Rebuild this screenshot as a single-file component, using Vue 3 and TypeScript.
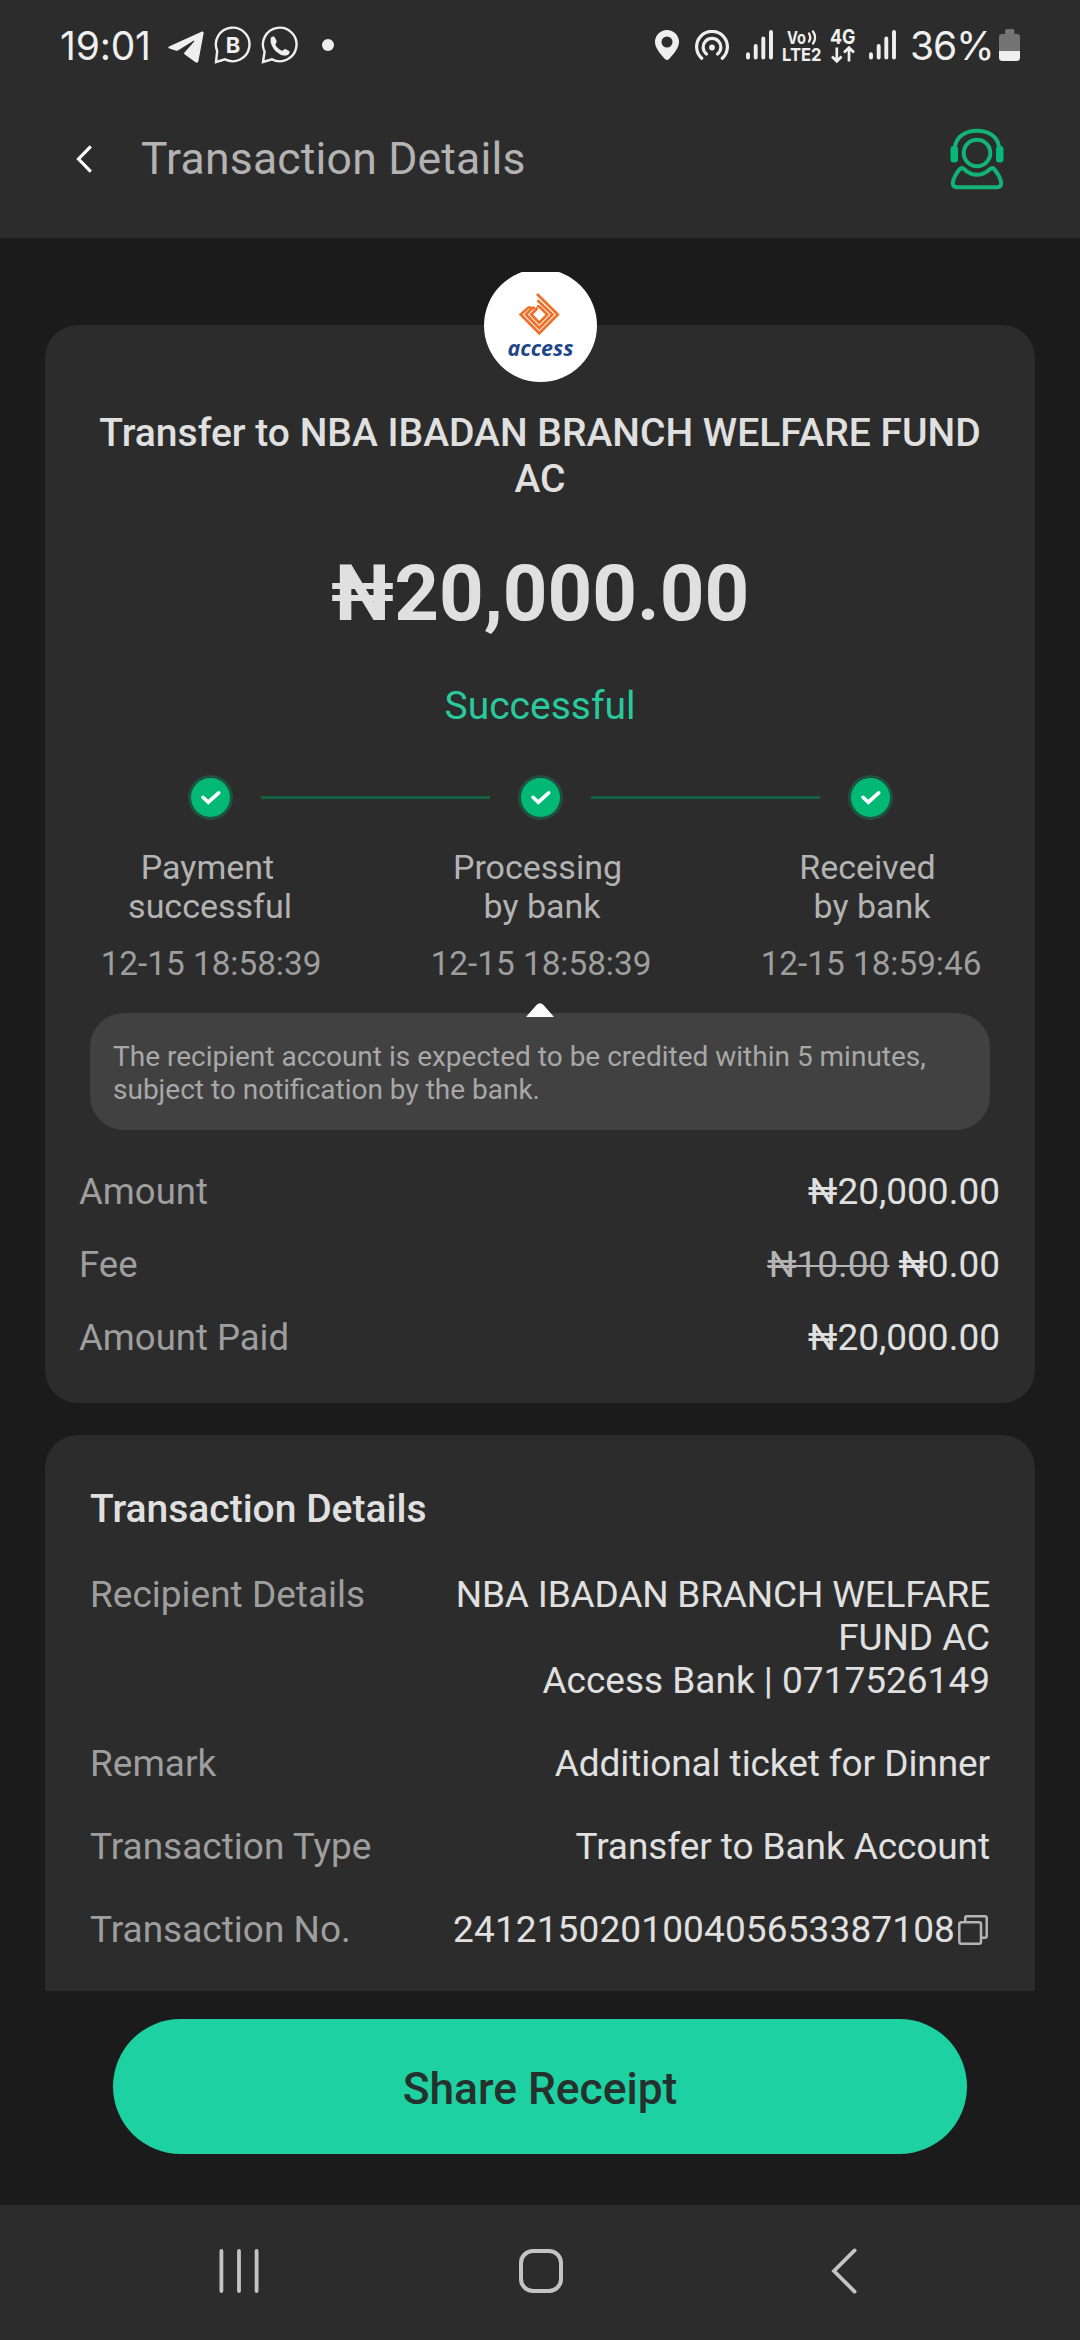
<script setup lang="ts">
interface Step {
  lines: [string, string]
  time: string
}
interface Detail {
  label: string
  value: string[]
  copy?: boolean
}

const steps: Step[] = [
  { lines: ['Payment', 'successful'], time: '12-15 18:58:39' },
  { lines: ['Processing', 'by bank'], time: '12-15 18:58:39' },
  { lines: ['Received', 'by bank'], time: '12-15 18:59:46' },
]

const amounts: { label: string; value: string; old?: string }[] = [
  { label: 'Amount', value: '₦20,000.00' },
  { label: 'Fee', value: '₦0.00', old: '₦10.00' },
  { label: 'Amount Paid', value: '₦20,000.00' },
]

const details: Detail[] = [
  { label: 'Recipient Details', value: ['NBA IBADAN BRANCH WELFARE', 'FUND AC', 'Access Bank | 0717526149'] },
  { label: 'Remark', value: ['Additional ticket for Dinner'] },
  { label: 'Transaction Type', value: ['Transfer to Bank Account'] },
  { label: 'Transaction No.', value: ['241215020100405653387108'], copy: true },
]
</script>

<template>
  <div class="screen">
    <header class="top">
      <div class="status">
        <div class="status-left">
          <span class="clock">19:01</span>
          <svg class="telegram" width="36" height="32" viewBox="0 0 36 32" fill="#efefef">
            <path d="M1.5 15.2 33.5 .7c1.3-.5 2.4.2 2.1 1.8L30.4 30c-.4 1.6-1.6 2.1-2.9 1.2L16.8 23.600c-.9-.7-.9-1.500-.1-2.300L26 10.800c.6-.8 0-1.300-.9-.8L10.300 19.200c-1 .6-1.800.7-2.900.4L1.400 17.600c-1.500-.5-1.500-1.700.1-2.400z" />
          </svg>
          <svg class="bubble" width="37" height="38" viewBox="0 0 37 38" fill="none" stroke="#efefef" stroke-width="2.400">
            <path d="M2 36 3.200 25A16.800 16.800 0 1 1 11 33.400z" />
            <text x="19" y="26.800" text-anchor="middle" class="bubble-letter">B</text>
          </svg>
          <svg class="bubble" width="37" height="38" viewBox="0 0 37 38" fill="none" stroke="#efefef" stroke-width="2.400">
            <path d="M2 36 3.600 25.800A16.800 16.800 0 1 1 11 33.400z" />
            <path d="M10 11.500c1.500-1.500 3.300-1.300 4 .2l1.700 3.600c.4 1-1.500 2.700-1.300 3.500 1.300 2.700 3.700 4.900 6.500 6 .9.300 2.400-2.100 3.500-1.700l3.700 1.900c1.200.7.5 2.500-1 3.700-6.500 4.300-20-7.500-17.100-17.200z" fill="#efefef" stroke="none" />
          </svg>
          <span class="dot"></span>
        </div>
        <div class="status-right">
          <svg class="pin" width="24" height="30" viewBox="0 0 24 30">
            <path fill-rule="evenodd" fill="#efefef" d="M12 0a12 12 0 0 1 12 12c0 6.500-6 12.500-10.200 17.200q-1.800 1.600-3.600 0C6 24.500 0 18.500 0 12A12 12 0 0 1 12 0zm0 6.500a5.500 5.500 0 1 0 0 11 5.500 5.500 0 0 0 0-11z" />
          </svg>
          <svg class="hotspot" width="34" height="30" viewBox="0 0 34 30" fill="none" stroke="#efefef" stroke-width="3.200" stroke-linecap="round">
            <path d="M6.700 28.200A15.400 15.400 0 1 1 27.300 28.200M11.400 24A8.800 8.800 0 1 1 22.600 24" />
            <circle cx="17" cy="17.500" r="2.900" fill="#efefef" stroke="none" />
          </svg>
          <svg class="signal" width="28" height="30" viewBox="0 0 28 30" stroke="#efefef" stroke-width="3.900" stroke-linecap="round">
            <path d="M2 24.200V27.500M9.700 16V27.500M17.300 8.500V27.500M25 2V27.500" />
          </svg>
          <svg class="volte" width="40" height="34" viewBox="0 0 40 34" fill="#efefef">
            <text x="5" y="15" class="mini" textLength="19" lengthAdjust="spacingAndGlyphs">Vo</text>
            <path d="M27 4.500q2.500 4 0 8M31 2.500q4.200 6 0 12" fill="none" stroke="#efefef" stroke-width="2.300" stroke-linecap="round" />
            <text x="0" y="31.700" class="mini" textLength="39.500" lengthAdjust="spacingAndGlyphs">LTE2</text>
          </svg>
          <svg class="fourg" width="26" height="36" viewBox="0 0 26 36" fill="#efefef">
            <text x="0" y="16" class="mini-4g" textLength="25.500" lengthAdjust="spacingAndGlyphs">4G</text>
            <path d="M6.800 19.500V33M2 28.500 6.800 33.300 11.600 28.500M19 33.500V20M14 24.500 19 19.700 24 24.500" fill="none" stroke="#efefef" stroke-width="2.700" />
          </svg>
          <svg class="signal two" width="28" height="30" viewBox="0 0 28 30" stroke="#efefef" stroke-width="3.900" stroke-linecap="round">
            <path d="M2 24.200V27.500M9.700 16V27.500M17.300 8.500V27.500M25 2V27.500" />
          </svg>
          <span class="percent">36%</span>
          <svg class="battery" width="21" height="32" viewBox="0 0 21 32">
            <path d="M6 5V2Q6 0 8 0h5.500q2 0 2 2v3H18q3 0 3 3v14H0V8q0-3 3-3z" fill="#737373" />
            <path d="M0 22h21v6.500Q21 32 17.500 32h-14Q0 32 0 28.500z" fill="#efefef" />
          </svg>
        </div>
      </div>
      <div class="appbar">
        <svg class="back" width="17" height="28" viewBox="0 0 17 28" fill="none" stroke="#fff" stroke-width="3.200">
          <path d="M14.800 1.300 2.500 14 14.800 26.700" />
        </svg>
        <h1>Transaction Details</h1>
        <svg class="agent" width="54" height="62" viewBox="0 0 54 62" fill="none" stroke="#12b27a" stroke-width="4">
          <path d="M5 19C6 9 15 2.700 27 2.700S48 9 49 19" />
          <circle cx="27" cy="25" r="13.300" />
          <rect x=".5" y="18" width="7.500" height="16.500" rx="3" fill="#05b877" stroke="none" />
          <rect x="46" y="18" width="7.500" height="16.500" rx="3" fill="#05b877" stroke="none" />
          <path d="M10.500 40.500C6.500 44.500 2.800 51 2.800 55.500Q3 59.200 6.800 59.200H47.200Q51 59.200 51.200 55.500C51.200 51 47.500 44.500 43.500 40.500Q41.800 39.400 39.800 41.200 34 46.800 27 46.800T14.200 41.200Q12.200 39.400 10.500 40.500z" />
        </svg>
      </div>
    </header>

    <main class="content">
      <section class="card summary">
        <svg class="bank-logo" width="113" height="110" viewBox="0 0 113 110">
          <circle cx="56.500" cy="53.500" r="56.500" fill="#fff" />
          <g fill="none" stroke="#ee7028" stroke-width="2.700">
            <path d="M53 22 73.800 42.500 55.300 61.300 36.700 42.500 44.500 35.500H47.500" />
            <path d="M53.500 28.200 68.500 42.500 55.300 56 42 42.500 48.500 35.800H51" />
            <path d="M53 34 55.300 34.600 63.300 42.500 55.300 50.700 47.200 42.500 53.500 36" />
          </g>
          <text x="23.500" y="84" class="bank-name" textLength="66" lengthAdjust="spacingAndGlyphs">access</text>
        </svg>

        <h2>Transfer to NBA IBADAN BRANCH WELFARE FUND AC</h2>
        <div class="total">₦20,000.00</div>
        <div class="state">Successful</div>

        <div class="track">
          <template v-for="(s, i) in steps" :key="i">
            <span v-if="i > 0" class="line"></span>
            <svg class="check" width="45" height="45" viewBox="0 0 45 45">
              <circle cx="22.500" cy="22.500" r="22.500" fill="#215040" />
              <circle cx="22.500" cy="22.500" r="19.500" fill="#02b875" />
              <path d="M15 22.300 20.300 27.200 30.700 17.800" fill="none" stroke="#fff" stroke-width="3.600" stroke-linecap="round" />
            </svg>
          </template>
        </div>
        <div class="labels">
          <div v-for="(s, i) in steps" :key="i" class="step">
            <div class="step-name"><span class="first">{{ s.lines[0] }}</span><br /><span :class="{ second: i > 0 }">{{ s.lines[1] }}</span></div>
            <div class="step-time">{{ s.time }}</div>
          </div>
        </div>

        <div class="notice">
          <svg class="pointer" width="28" height="14" viewBox="0 0 28 14">
            <path d="M0 14 10.500 2Q14-1.500 17.500 2L28 14z" fill="#fafafa" />
          </svg>
          The recipient account is expected to be credited within 5 minutes, subject to notification by the bank.
        </div>

        <div class="amounts">
          <div v-for="a in amounts" :key="a.label" class="amount-row">
            <span class="label">{{ a.label }}</span>
            <span class="value"><s v-if="a.old">{{ a.old }}</s> {{ a.value }}</span>
          </div>
        </div>
      </section>

      <section class="card details">
        <h3>Transaction Details</h3>
        <div v-for="d in details" :key="d.label" class="detail-row">
          <span class="label">{{ d.label }}</span>
          <div class="value" :class="{ party: d.value.length > 1, number: d.copy }">
            <div v-for="v in d.value" :key="v">{{ v }}</div>
          </div>
          <svg v-if="d.copy" class="copy" width="30" height="30" viewBox="0 0 30 30" fill="none" stroke="#b4b4b4" stroke-width="2.500">
            <rect x="1.300" y="7.200" width="21.700" height="21.500" rx="2" />
            <path d="M7.200 7V3Q7.200 1.300 9 1.300H27Q28.700 1.300 28.700 3V21Q28.700 22.800 27 22.800H23" />
          </svg>
        </div>
      </section>
    </main>

    <footer class="action">
      <button type="button">Share Receipt</button>
    </footer>

    <nav class="nav">
      <svg class="recents" width="40" height="46" viewBox="0 0 40 46" stroke="#c4c4c4" stroke-width="3.800" stroke-linecap="round">
        <path d="M2.400 3V43M20 3V43M37.600 3V43" />
      </svg>
      <svg class="home" width="46" height="46" viewBox="0 0 46 46" fill="none" stroke="#c4c4c4" stroke-width="4">
        <rect x="3" y="3" width="40" height="40" rx="12" />
      </svg>
      <svg class="nav-back" width="26" height="46" viewBox="0 0 26 46" fill="none" stroke="#c4c4c4" stroke-width="3.800" stroke-linecap="round">
        <path d="M23.600 2.400 3 23 23.600 43.600" />
      </svg>
    </nav>
  </div>
</template>

<style>
body {
  margin: 0;
  background: #1b1b1b;
}
</style>

<style scoped>
.screen {
  display: flex;
  flex-direction: column;
  width: 1080px;
  height: 2340px;
  overflow: hidden;
  background: #1b1b1b;
  color: #e0e0e0;
  font-family: Roboto, "Noto Sans", sans-serif;
}
svg {
  display: block;
  flex: none;
}
h1, h2, h3 {
  margin: 0;
}
.top {
  height: 238px;
  background: #2c2c2c;
}
.status {
  display: flex;
  justify-content: space-between;
  height: 70px;
  padding: 10px 60px 0;
  color: #efefef;
  font-family: Inter, Roboto, sans-serif;
}
.status-left, .status-right {
  display: flex;
  align-items: center;
}
.clock {
  width: 108px;
  font-size: 39px;
  letter-spacing: -0.2px;
  white-space: nowrap;
}
.telegram {
  margin-top: 3px;
}
.bubble {
  margin-left: 10px;
}
.bubble-letter {
  font: 700 22px Inter, sans-serif;
  fill: #efefef;
  stroke: none;
}
.dot {
  width: 12px;
  height: 12px;
  margin-left: 24px;
  border-radius: 50%;
  background: #efefef;
}
.hotspot {
  margin-left: 16px;
}
.signal {
  margin-left: 17px;
}
.volte, .fourg {
  overflow: visible;
}
.volte {
  margin: 2px 0 0 8px;
}
.mini {
  font: 700 18px Inter, sans-serif;
}
.fourg {
  margin: 1px 0 0 8px;
}
.mini-4g {
  font: 700 20.500px Inter, sans-serif;
}
.signal.two {
  margin-left: 13px;
}
.percent {
  width: 83px;
  margin: 0 6px 0 13px;
  font-size: 39px;
  letter-spacing: -1px;
  white-space: nowrap;
}
.appbar {
  display: flex;
  align-items: center;
  height: 158px;
  padding: 0 76px;
}
.appbar h1 {
  flex: 1;
  margin-left: 48px;
  color: #b3b3b3;
  font-size: 44.500px;
  font-weight: 400;
  letter-spacing: 0.200px;
}
.content {
  height: 1753px;
  overflow: hidden;
}
.card {
  box-sizing: border-box;
  margin: 0 45px;
  border-radius: 33px;
  background: #2c2c2c;
}
.summary {
  position: relative;
  height: 1078px;
  margin-top: 87px;
  padding: 85px 35px 0;
  text-align: center;
}
.bank-logo {
  position: absolute;
  top: -53px;
  left: 439px;
}
.bank-name {
  font: italic 700 21.500px "Open Sans", "Noto Sans", sans-serif;
  fill: #1f4788;
}
.summary h2 {
  font-size: 39px;
  font-weight: 500;
  line-height: 46px;
}
.total {
  margin-top: 46px;
  font-size: 78px;
  font-weight: 700;
  line-height: 92px;
}
.state {
  margin-top: 43px;
  color: #28c99c;
  font-size: 39px;
  line-height: 46px;
}
.track {
  display: flex;
  align-items: center;
  margin: 46px 107px 0 108px;
}
.line {
  flex: 1;
  height: 3px;
  margin: 0 28px;
  background: #156144;
}
.labels {
  display: flex;
  margin: 28px -35px 0;
}
.step {
  flex: 1;
  line-height: 39px;
}
.step-name {
  color: #b3b3b3;
  font-size: 34px;
}
.first {
  margin-right: 5px;
}
.second {
  margin-left: 4px;
}
.step-time {
  margin-top: 18px;
  padding-left: 2px;
  color: #9e9e9e;
  font-size: 33.300px;
}
.notice {
  position: relative;
  box-sizing: border-box;
  height: 117px;
  margin: 30px 10px 0;
  padding: 27px 23px 0;
  border-radius: 34px;
  background: #414141;
  color: #a8a8a8;
  font-size: 28px;
  line-height: 33px;
  text-align: left;
}
.pointer {
  position: absolute;
  top: -10px;
  left: 436px;
}
.amounts {
  margin: 25px 0 0 -1px;
}
.amount-row {
  display: flex;
  justify-content: space-between;
  font-size: 37px;
  line-height: 73px;
}
.amount-row .label {
  font-size: 36.500px;
}
.label {
  color: #9e9e9e;
}
.value s {
  color: #b3b3b3;
  text-decoration-thickness: 2px;
}
.details {
  height: 700px;
  margin-top: 32px;
  padding: 51px 45px 0;
}
.details h3 {
  margin-bottom: 41px;
  font-size: 39px;
  font-weight: 500;
  line-height: 46px;
}
.detail-row {
  display: flex;
  margin-bottom: 40px;
  font-size: 37px;
  line-height: 43px;
}
.detail-row .value {
  flex: 1;
  letter-spacing: -0.080px;
  text-align: right;
}
.detail-row .party div:first-child {
  letter-spacing: -0.180px;
}
.detail-row .party div:last-child {
  letter-spacing: 0;
}
.detail-row .number {
  letter-spacing: 0.120px;
}
.copy {
  margin: 7px 2px 0 3px;
}
.action {
  height: 186px;
  padding: 28px 113px 0;
}
.action button {
  display: block;
  width: 100%;
  height: 135px;
  padding: 4px 0 0;
  border: 0;
  border-radius: 68px;
  background: #1ed1a2;
  color: #26302d;
  font: 500 44.300px Roboto, sans-serif;
}
.nav {
  display: flex;
  align-items: center;
  flex: 1;
  padding: 0 0 3px 219px;
  background: #2c2c2c;
}
.home {
  margin-left: 259px;
}
.nav-back {
  margin-left: 267px;
}
</style>
